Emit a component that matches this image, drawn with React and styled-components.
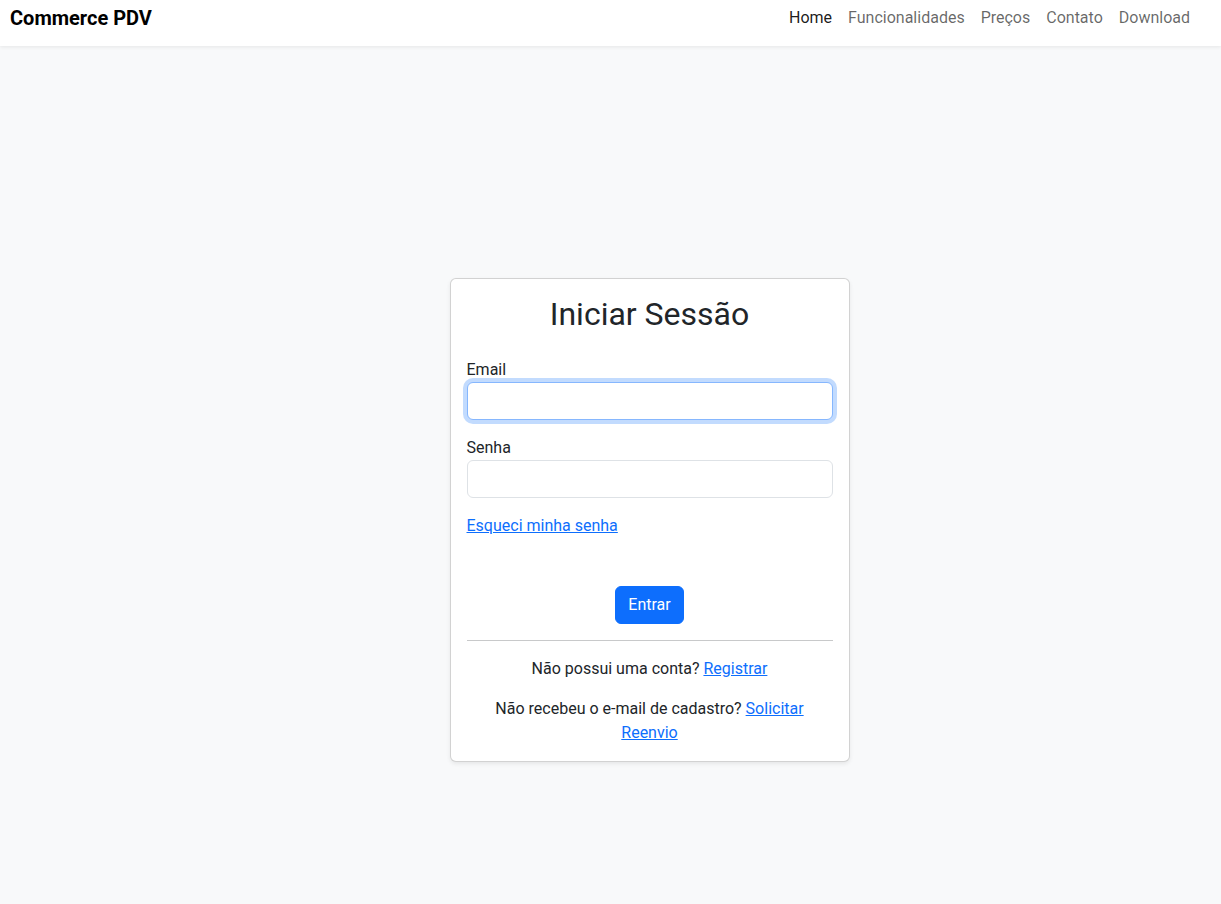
import React from 'react'
import styled, { createGlobalStyle } from 'styled-components'

const links = ['Home', 'Funcionalidades', 'Preços', 'Contato', 'Download']

export default function App() {
  return (
    <>
      <Global />
      <Page>
        <Navbar>
          <Brand href="#">Commerce PDV</Brand>
          <NavList>
            {links.map((l, i) => (
              <li key={l}>
                <NavLink href="#" active={i === 0 ? 1 : 0}>{l}</NavLink>
              </li>
            ))}
          </NavList>
        </Navbar>
        <Main>
          <Card>
            <Title>Iniciar Sessão</Title>
            <Field>
              <Label htmlFor="email">Email</Label>
              <Input id="email" type="email" focused={1} autoFocus />
            </Field>
            <Field>
              <Label htmlFor="senha">Senha</Label>
              <Input id="senha" type="password" />
            </Field>
            <Forgot>
              <Link href="#">Esqueci minha senha</Link>
            </Forgot>
            <ButtonRow>
              <Button type="button">Entrar</Button>
            </ButtonRow>
            <Divider />
            <Note>Não possui uma conta? <Link href="#">Registrar</Link></Note>
            <Note last={1}>
              Não recebeu o e-mail de cadastro? <Link href="#">Solicitar Reenvio</Link>
            </Note>
          </Card>
        </Main>
      </Page>
    </>
  )
}

const Global = createGlobalStyle`
  * { box-sizing: border-box; }
  html, body { margin: 0; padding: 0; }
  body {
    font-family: Roboto, "Liberation Sans", sans-serif;
    font-size: 16px;
    line-height: 1.5;
    color: #212529;
    background: #f8f9fa;
  }
`

const Page = styled.div`
  min-height: 904px;
  display: flex;
  flex-direction: column;
`

const Navbar = styled.nav`
  height: 46px;
  background: #fff;
  box-shadow: 0 1px 4px rgba(0, 0, 0, 0.08);
  display: flex;
  justify-content: space-between;
  align-items: flex-start;
  padding: 3px 23px 0 10px;
`

const Brand = styled.a`
  font-size: 20px;
  line-height: 30px;
  font-weight: 700;
  color: #000;
  text-decoration: none;
`

const NavList = styled.ul`
  list-style: none;
  margin: 3px 0 0;
  padding: 0;
  display: flex;
`

const NavLink = styled.a`
  display: block;
  padding: 0 8px;
  line-height: 24px;
  text-decoration: none;
  color: ${p => (p.active ? 'rgba(0,0,0,0.9)' : 'rgba(0,0,0,0.6)')};
`

const Main = styled.main`
  flex: 1;
  display: flex;
  justify-content: center;
  padding: 232px 0 0 78px;
`

const Card = styled.div`
  width: 400px;
  align-self: flex-start;
  background: #fff;
  border: 1px solid rgba(0, 0, 0, 0.175);
  border-radius: 6px;
  box-shadow: 0 2px 4px rgba(0, 0, 0, 0.075);
  padding: 16px;
`

const Title = styled.h2`
  margin: 0 0 24px;
  font-size: 32px;
  font-weight: 400;
  line-height: 1.2;
  text-align: center;
`

const Field = styled.div`
  margin-bottom: 15px;
`

const Label = styled.label`
  display: block;
  padding-top: 1px;
  line-height: 24px;
`

const Input = styled.input`
  display: block;
  width: 100%;
  height: 38px;
  padding: 6px 12px;
  font: inherit;
  color: #212529;
  background: #fff;
  border: 1px solid ${p => (p.focused ? '#86b7fe' : '#dee2e6')};
  border-radius: 6px;
  outline: none;
  box-shadow: ${p => (p.focused ? '0 0 0 4px rgba(13,110,253,0.25)' : 'none')};
  &:focus {
    border-color: #86b7fe;
    box-shadow: 0 0 0 4px rgba(13, 110, 253, 0.25);
  }
`

const Forgot = styled.div`
  padding-top: 1px;
  margin-bottom: 48px;
`

const Link = styled.a`
  color: #0d6efd;
  text-decoration: underline;
`

const ButtonRow = styled.div`
  display: flex;
  justify-content: center;
`

const Button = styled.button`
  height: 38px;
  padding: 6px 12px;
  font: inherit;
  color: #fff;
  background: #0d6efd;
  border: 1px solid #0d6efd;
  border-radius: 6px;
  cursor: pointer;
`

const Divider = styled.hr`
  margin: 16px 0;
  border: 0;
  border-top: 1px solid #c8c9ca;
`

const Note = styled.p`
  margin: 0 0 ${p => (p.last ? '0' : '16px')};
  text-align: center;
`
